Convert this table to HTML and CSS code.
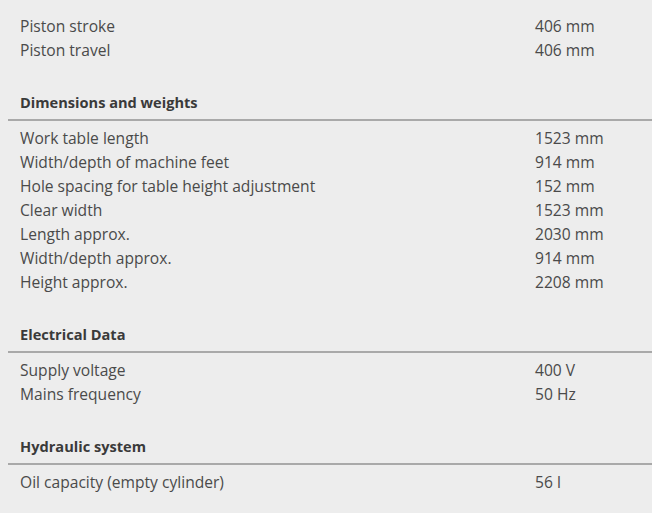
FILE: index.html
```html
<!DOCTYPE html>
<html lang="en">
<head>
<meta charset="utf-8">
<title>Specifications</title>
<link rel="stylesheet" href="styles.css">
</head>
<body>
<div class="specs">
  <section class="group">
    <div class="rows">
      <div class="row"><span class="label">Piston stroke</span><span class="value">406 mm</span></div>
      <div class="row"><span class="label">Piston travel</span><span class="value">406 mm</span></div>
    </div>
  </section>
  <section class="group">
    <h3 class="heading">Dimensions and weights</h3>
    <div class="rows">
      <div class="row"><span class="label">Work table length</span><span class="value">1523 mm</span></div>
      <div class="row"><span class="label">Width/depth of machine feet</span><span class="value">914 mm</span></div>
      <div class="row"><span class="label">Hole spacing for table height adjustment</span><span class="value">152 mm</span></div>
      <div class="row"><span class="label">Clear width</span><span class="value">1523 mm</span></div>
      <div class="row"><span class="label">Length approx.</span><span class="value">2030 mm</span></div>
      <div class="row"><span class="label">Width/depth approx.</span><span class="value">914 mm</span></div>
      <div class="row"><span class="label">Height approx.</span><span class="value">2208 mm</span></div>
    </div>
  </section>
  <section class="group">
    <h3 class="heading">Electrical Data</h3>
    <div class="rows">
      <div class="row"><span class="label">Supply voltage</span><span class="value">400 V</span></div>
      <div class="row"><span class="label">Mains frequency</span><span class="value">50 Hz</span></div>
    </div>
  </section>
  <section class="group">
    <h3 class="heading">Hydraulic system</h3>
    <div class="rows">
      <div class="row"><span class="label">Oil capacity (empty cylinder)</span><span class="value">56 l</span></div>
    </div>
  </section>
</div>
</body>
</html>
```

FILE: styles.css
```css
html, body {
  margin: 0;
  padding: 0;
  background: #ededed;
}
body {
  font-family: "Open Sans", "Liberation Sans", sans-serif;
  font-size: 15.6px;
  color: #4a4a4a;
}
.specs {
  padding: 14px 0 0 8px;
  display: flex;
  flex-direction: column;
  gap: 28px;
}
.heading {
  margin: 0 0 5px 0;
  padding: 0 0 5px 12px;
  line-height: 24px;
  font-size: 14.6px;
  font-weight: 700;
  color: #3a3a3a;
  border-bottom: 2px solid #a9a9a9;
}
.row {
  display: grid;
  grid-template-columns: 515px 1fr;
  padding-left: 12px;
  line-height: 24px;
}
```
